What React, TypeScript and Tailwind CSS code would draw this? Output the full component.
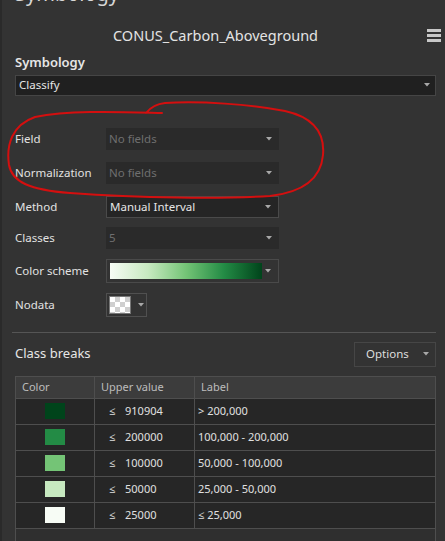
import React from "react";

// Symbology pane: classified raster renderer with a hand-drawn callout around the field pickers.

const FONT = "font-['Noto_Sans','Open_Sans',sans-serif]";

const BREAKS = [
  { color: "#00441b", upper: "910904", label: "> 200,000" },
  { color: "#238b45", upper: "200000", label: "100,000 - 200,000" },
  { color: "#74c476", upper: "100000", label: "50,000 - 100,000" },
  { color: "#c7e9c0", upper: "50000", label: "25,000 - 50,000" },
  { color: "#f7fcf5", upper: "25000", label: "≤ 25,000" },
];

function Caret({ className = "" }: { className?: string }) {
  return (
    <svg width="6" height="4" viewBox="0 0 6 4" className={className}>
      <path d="M0 0h6L3 3.5z" fill="#a8a8a8" />
    </svg>
  );
}

function Dropdown({
  value,
  disabled,
  bordered,
}: {
  value: string;
  disabled?: boolean;
  bordered?: boolean;
}) {
  return (
    <div
      className={`flex h-[22px] w-[173px] items-center justify-between pl-[3px] pr-[7px] text-[11.5px] ${
        disabled
          ? "bg-[#2a2a2a] text-[#6f6f6f]"
          : "bg-[#252525] text-[#e6e6e6]"
      } ${bordered ? "border border-[#4a4a4a]" : ""}`}
    >
      <span>{value}</span>
      <Caret />
    </div>
  );
}

function Row({
  label,
  children,
  className = "",
}: {
  label: string;
  children: React.ReactNode;
  className?: string;
}) {
  return (
    <div className={`flex items-center ${className}`}>
      <span className="w-[91px] text-[11.5px] text-[#e2e2e2]">{label}</span>
      {children}
    </div>
  );
}

export default function App() {
  return (
    <div
      className={`relative flex h-[541px] w-[445px] overflow-hidden bg-[#333333] ${FONT}`}
    >
      <div className="w-[2px] shrink-0 bg-[#2a2a2a]" />
      <div className="flex min-w-0 flex-1 flex-col pl-[13px] pr-[9px]">
        {/* pane caption, scrolled mostly out of view */}
        <div className="h-[6px] overflow-hidden">
          <div className="-mt-[17px] text-[20px] leading-[22px] text-[#d8d8d8]">Symbology</div>
        </div>

        <div className="relative mt-[19px] flex h-[22px] items-center justify-center pr-[20px]">
          <span className="text-[14.5px] text-[#e4e4e4]">CONUS_Carbon_Aboveground</span>
          <div className="absolute right-[-5px] top-[4px] flex flex-col gap-[2px]">
            <div className="h-[3px] w-[14px] bg-[#c8c8c8]" />
            <div className="h-[3px] w-[14px] bg-[#c8c8c8]" />
            <div className="h-[3px] w-[14px] bg-[#c8c8c8]" />
          </div>
        </div>

        <div className="mt-[6px] text-[13px] font-semibold text-[#e6e6e6]">Symbology</div>
        <div className="mt-[2px] flex h-[21px] items-center justify-between border border-[#454545] bg-[#202020] pl-[3px] pr-[5px] text-[11.5px] text-[#e6e6e6]">
          <span>Classify</span>
          <Caret />
        </div>

        <Row label="Field" className="mt-[32px]">
          <Dropdown value="No fields" disabled />
        </Row>
        <Row label="Normalization" className="mt-[12px]">
          <Dropdown value="No fields" disabled />
        </Row>
        <Row label="Method" className="mt-[12px]">
          <Dropdown value="Manual Interval" bordered />
        </Row>
        <Row label="Classes" className="mt-[9px]">
          <Dropdown value="5" disabled />
        </Row>
        <Row label="Color scheme" className="mt-[10px]">
          <div className="flex h-[24px] w-[173px] items-center justify-between border border-[#4a4a4a] pl-[3px] pr-[7px]">
            <div className="h-[16px] w-[152px] bg-[linear-gradient(to_right,#f7fcf5,#c7e9c0_25%,#74c476_50%,#238b45_75%,#00441b)]" />
            <Caret />
          </div>
        </Row>
        <Row label="Nodata" className="mt-[10px]">
          <div className="flex h-[24px] w-[41px] items-center gap-[7px] border border-[#505050] pl-[2px]">
            <div className="h-[18px] w-[22px] border border-[#777] bg-[#ffffff] bg-[conic-gradient(#cfcfcf_25%,#ffffff_0_50%,#cfcfcf_0_75%,#ffffff_0)] bg-[length:10px_10px]" />
            <Caret />
          </div>
        </Row>

        <div className="-ml-[3px] mt-[15px] h-px bg-[#555555]" />

        <div className="mt-[9px] flex items-center justify-between">
          <span className="text-[13px] text-[#e6e6e6]">Class breaks</span>
          <div className="flex h-[25px] w-[82px] items-center justify-between border border-[#464646] pl-[11px] pr-[6px] text-[11.5px] text-[#dedede]">
            <span>Options</span>
            <Caret />
          </div>
        </div>

        <div className="mt-[9px] flex flex-1 flex-col border-l border-r border-t border-[#4e4e4e] bg-[#2f2f2f] text-[11px]">
          <div className="flex h-[22px] border-b border-[#4e4e4e] bg-[#3c3c3c] text-[#bdbdbd]">
            <div className="flex w-[79px] items-center border-r border-[#4e4e4e] pl-[6px]">Color</div>
            <div className="flex w-[100px] items-center border-r border-[#4e4e4e] pl-[6px]">Upper value</div>
            <div className="flex flex-1 items-center pl-[6px]">Label</div>
          </div>
          {BREAKS.map((b) => (
            <div key={b.upper} className="flex h-[26px] border-b border-[#4e4e4e] bg-[#262626] text-[#e0e0e0]">
              <div className="flex w-[79px] items-center justify-center border-r border-[#4e4e4e]">
                <div className="h-[16px] w-[20px]" style={{ backgroundColor: b.color }} />
              </div>
              <div className="flex w-[100px] items-center border-r border-[#4e4e4e] pl-[14px]">
                <span className="w-[16px]">≤</span>
                <span>{b.upper}</span>
              </div>
              <div className="flex flex-1 items-center pl-[3px]">{b.label}</div>
            </div>
          ))}
        </div>
      </div>

      {/* red marker loop drawn around Field / Normalization */}
      <svg
        className="pointer-events-none absolute left-0 top-0"
        width="445"
        height="541"
        viewBox="0 0 445 541"
      >
        <path
          d="M146 113 C 150 108, 156 104, 165 103 C 200 101, 250 104, 285 111 C 312 117, 325 132, 323 155 C 321 178, 305 192, 270 196 C 220 199, 140 198, 70 193 C 30 190, 12 182, 9 165 C 6 145, 12 125, 35 117 C 70 110, 120 112, 162 113"
          fill="none"
          stroke="#d40f0f"
          strokeWidth="2"
          strokeLinecap="round"
        />
      </svg>
    </div>
  );
}
